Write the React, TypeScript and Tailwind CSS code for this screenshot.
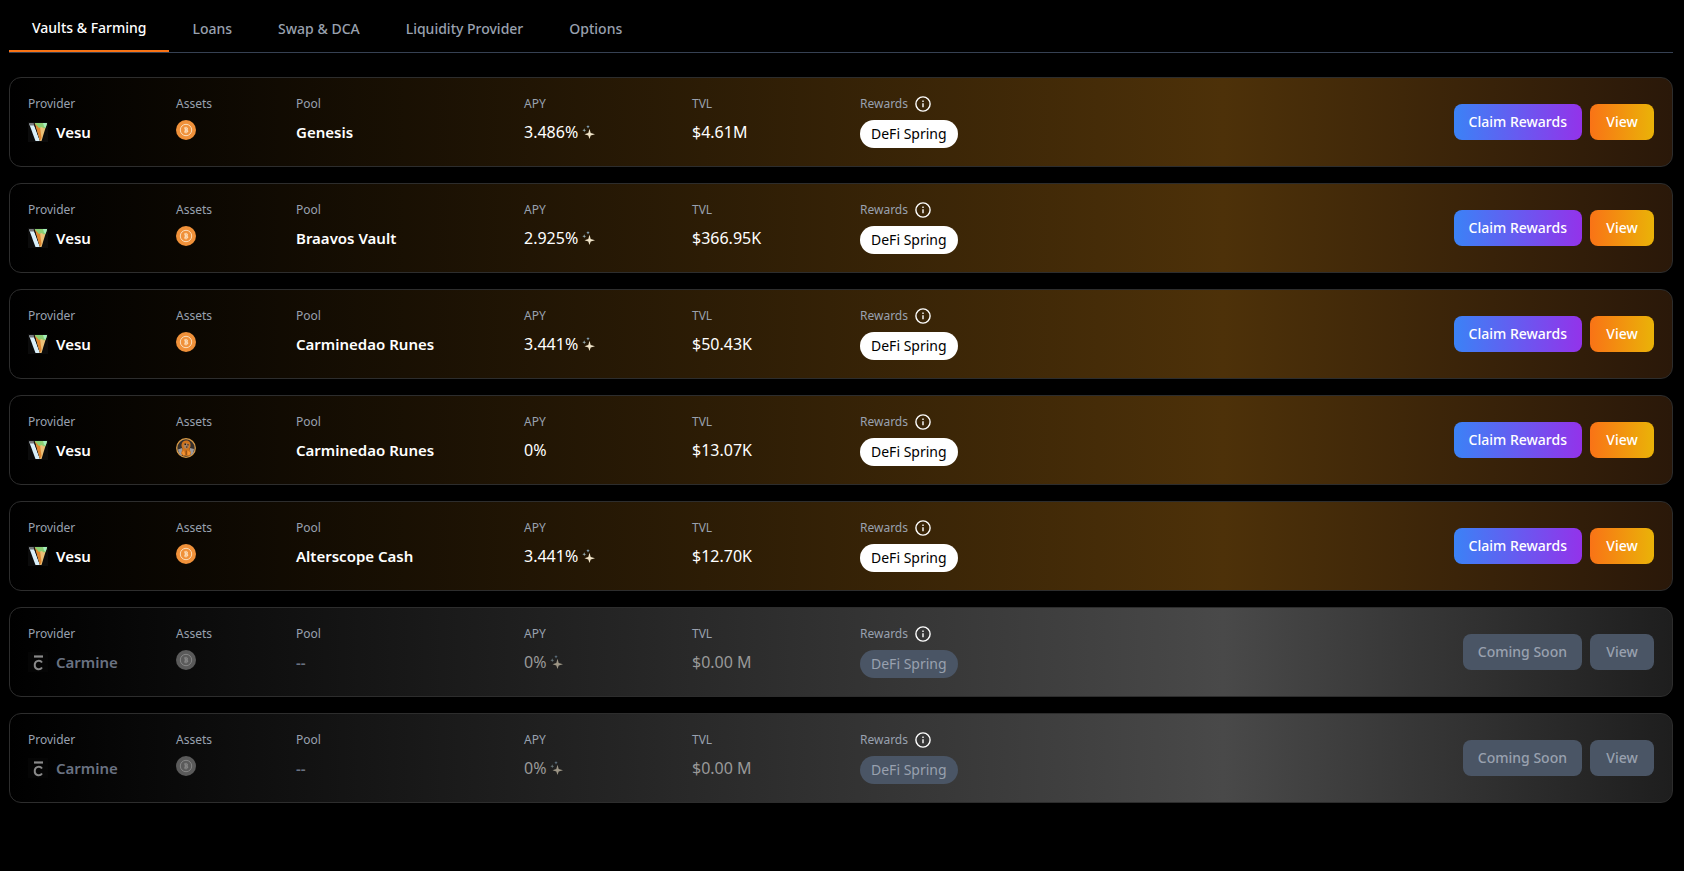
import type { ReactNode } from "react";

type Vault = {
  provider: "Vesu" | "Carmine";
  asset: "btc" | "dog";
  pool: string;
  apy: string;
  boosted: boolean;
  tvl: string;
  active: boolean;
};

const TABS = ["Vaults & Farming", "Loans", "Swap & DCA", "Liquidity Provider", "Options"];

const VAULTS: Vault[] = [
  { provider: "Vesu", asset: "btc", pool: "Genesis", apy: "3.486%", boosted: true, tvl: "$4.61M", active: true },
  { provider: "Vesu", asset: "btc", pool: "Braavos Vault", apy: "2.925%", boosted: true, tvl: "$366.95K", active: true },
  { provider: "Vesu", asset: "btc", pool: "Carminedao Runes", apy: "3.441%", boosted: true, tvl: "$50.43K", active: true },
  { provider: "Vesu", asset: "dog", pool: "Carminedao Runes", apy: "0%", boosted: false, tvl: "$13.07K", active: true },
  { provider: "Vesu", asset: "btc", pool: "Alterscope Cash", apy: "3.441%", boosted: true, tvl: "$12.70K", active: true },
  { provider: "Carmine", asset: "btc", pool: "--", apy: "0%", boosted: true, tvl: "$0.00 M", active: false },
  { provider: "Carmine", asset: "btc", pool: "--", apy: "0%", boosted: true, tvl: "$0.00 M", active: false },
];

function VesuLogo() {
  return (
    <svg viewBox="0 0 20 20" className="size-5 shrink-0" aria-hidden="true">
      <rect width="20" height="20" fill="#0b0b0b" />
      <path d="M1 1.5h4.5L12 19H7.5z" fill="#d9f0fb" />
      <path d="M1 1h5l1 2.500H1.800z" fill="#77797d" />
      <path d="M5.500 1.500 7 1l6 13-1 5z" fill="#1b120c" />
      <path d="M7 1h12l-5.500 18H12z" fill="#ecc178" />
      <path d="M7 1h4.500l2 15-1.500 3z" fill="#e0862f" />
      <path d="M6.500 1H19l-1.200 4.500-2 1-2-1.500L11 6z" fill="#8ccf73" />
      <path d="M15 1h4l-1.200 4.500-1.800-1z" fill="#a5efbd" />
    </svg>
  );
}

function CarmineLogo() {
  return (
    <svg viewBox="0 0 20 20" className="size-5 shrink-0" aria-hidden="true">
      <rect width="20" height="20" fill="#050505" />
      <path d="M6 4.500h9" stroke="#8a8a8a" strokeWidth="2.200" />
      <path d="M14 10.500A4 4 0 0 0 6.800 12v2.200A4 4 0 0 0 14 15.500" fill="none" stroke="#8a8a8a" strokeWidth="2" />
    </svg>
  );
}

function BitcoinIcon({ active }: { active: boolean }) {
  const base = active ? "#f0913a" : "#5a5a5a";
  const line = active ? "#fbdcb8" : "#858585";
  return (
    <svg viewBox="0 0 20 20" className="size-5 shrink-0" role="img" aria-label="BTC">
      <circle cx="10" cy="10" r="10" fill={base} />
      <circle cx="10" cy="10" r="5.700" fill="none" stroke={line} strokeWidth="1" />
      <path
        d="M8 7.500h2.800a1.300 1.300 0 0 1 .6 2.400 1.400 1.400 0 0 1-.4 2.700H8v-1h.7v-3.100H8zM9.500 6.700h1v1h-1zM9.500 12.400h1v1h-1z"
        fill={line}
      />
      <path d="M9.900 8.700h.8M9.900 11.200h.8" stroke={base} strokeWidth=".6" />
    </svg>
  );
}

function DogIcon() {
  return (
    <svg viewBox="0 0 20 20" className="size-5 shrink-0" role="img" aria-label="DOG">
      <circle cx="10" cy="10" r="9.300" fill="#35302e" stroke="#d79a48" strokeWidth="1.300" />
      <path d="M2 11.500 6 10l2 5-3 2.500A9 9 0 0 1 2 11.500zM18 11l-4-1-1 5 2 2.500a9 9 0 0 0 3-6.500z" fill="#9c9a9c" />
      <path d="M5.500 8C5.500 4 7.500 2.500 10.500 2.500S15 5 14.500 8.500L13.500 11l1.500 3.500-1 3-3 .5-4-.5-2-2L6.500 11z" fill="#cf741d" />
      <path d="M7.500 6.500 10 5l3 1.500-.5 3L10 11 8 9.500z" fill="#a98564" />
      <path d="M8.500 5.500h1.500v1.500H8.500zM11.500 6h1v1.500h-1zM10 8.500h1.500v1H10z" fill="#2a1a10" />
      <path d="M6 14.500 8 12.500l1.300 4.500-2.300.5zM11.500 12.500l3 2-1 3-2-.5z" fill="#f59331" />
      <path d="M10.200 12.500v4.500" stroke="#6b3a16" strokeWidth=".8" />
    </svg>
  );
}

function InfoIcon() {
  return (
    <svg viewBox="0 0 16 16" className="size-4" fill="none" stroke="#fff" strokeWidth="1.400" aria-hidden="true">
      <circle cx="8" cy="8" r="7.100" />
      <path d="M8 7.200v4.100M8 4.600v1.500" />
    </svg>
  );
}

function SparkleIcon({ active }: { active: boolean }) {
  return (
    <svg viewBox="0 0 14 14" className={active ? "size-3.5" : "size-3.5 opacity-60"} aria-hidden="true">
      <path d="M7.500 3.800 8.700 8 13 9.200 8.700 10.400 7.500 14 6.300 10.400 2.500 9.200 6.300 8z" fill="#efe3c8" />
      <path d="M6 0l.5 1.200L7.700 1.700l-1.200.5L6 3.400l-.5-1.200-1.200-.5 1.200-.5z" fill="#8fb4cf" />
      <path d="M2.200 3.200l.5 1.500 1.500.5-1.500.5-.5 1.500-.5-1.500L.3 5.200l1.400-.5z" fill="#9db5bb" />
    </svg>
  );
}

function Field({ label, extra, width, children }: { label: string; extra?: ReactNode; width: string; children: ReactNode }) {
  return (
    <div className={`flex shrink-0 flex-col gap-2 ${width}`}>
      <dt className="flex h-4 items-center gap-[7px] text-xs text-gray-400">
        {label}
        {extra}
      </dt>
      <dd>{children}</dd>
    </div>
  );
}

function VaultCard({ vault }: { vault: Vault }) {
  const { active } = vault;
  const nameTone = active ? "text-white" : "text-gray-500";
  const valueTone = active ? "text-white" : "text-[#999999]";
  const button = "h-9 rounded-lg text-sm font-medium whitespace-nowrap";
  const muted = "bg-gray-600 text-gray-400";

  return (
    <li
      className={`flex items-center justify-between rounded-xl border border-[#2d2d2d] p-[18px] ${
        active
          ? "bg-[linear-gradient(90deg,#000000_0%,#4d3109_73%,#2a1809_100%)]"
          : "bg-[linear-gradient(90deg,#000000_0%,#494949_73%,#1e1e1e_100%)]"
      }`}
    >
      <dl className="flex">
        <Field label="Provider" width="w-[148px]">
          <div className="flex items-center gap-2">
            {vault.provider === "Vesu" ? <VesuLogo /> : <CarmineLogo />}
            <span className={`text-[15px] leading-6 font-semibold ${nameTone}`}>{vault.provider}</span>
          </div>
        </Field>
        <Field label="Assets" width="w-[120px]">
          {vault.asset === "btc" ? <BitcoinIcon active={active} /> : <DogIcon />}
        </Field>
        <Field label="Pool" width="w-[228px]">
          <div className={`text-[15px] leading-6 font-semibold ${nameTone}`}>{vault.pool}</div>
        </Field>
        <Field label="APY" width="w-[168px]">
          <div className={`flex items-center gap-1 text-base leading-6 ${valueTone}`}>
            {vault.apy}
            {vault.boosted && <SparkleIcon active={active} />}
          </div>
        </Field>
        <Field label="TVL" width="w-[168px]">
          <div className={`text-base leading-6 ${valueTone}`}>{vault.tvl}</div>
        </Field>
        <Field
          label="Rewards"
          width="w-[120px]"
          extra={
            <button type="button" aria-label="About rewards">
              <InfoIcon />
            </button>
          }
        >
          <span
            className={`inline-flex h-7 items-center rounded-full px-[11px] text-sm whitespace-nowrap ${
              active ? "bg-white text-black" : muted
            }`}
          >
            DeFi Spring
          </span>
        </Field>
      </dl>
      <div className="flex gap-2">
        <button
          type="button"
          disabled={!active}
          className={`${button} px-[15px] ${active ? "bg-linear-to-r/srgb from-[#3b82f6] to-[#9333ea] text-white" : muted}`}
        >
          {active ? "Claim Rewards" : "Coming Soon"}
        </button>
        <button
          type="button"
          disabled={!active}
          className={`${button} w-16 ${active ? "bg-linear-to-r/srgb from-[#f97316] to-[#eab308] text-white" : muted}`}
        >
          View
        </button>
      </div>
    </li>
  );
}

export default function App() {
  return (
    <main className="min-h-screen bg-black pt-1.5 pr-[11px] pb-6 pl-[9px] font-['Noto_Sans',sans-serif] text-white">
      <div role="tablist" className="flex border-b border-gray-700">
        {TABS.map((tab, i) => (
          <button
            key={tab}
            type="button"
            role="tab"
            aria-selected={i === 0}
            className={`px-[23px] py-3 text-sm font-medium ${
              i === 0 ? "border-b-2 border-[#f97316] text-white" : "text-gray-400"
            }`}
          >
            {tab}
          </button>
        ))}
      </div>
      <ul className="mt-6 flex flex-col gap-4">
        {VAULTS.map((vault, i) => (
          <VaultCard key={i} vault={vault} />
        ))}
      </ul>
    </main>
  );
}
